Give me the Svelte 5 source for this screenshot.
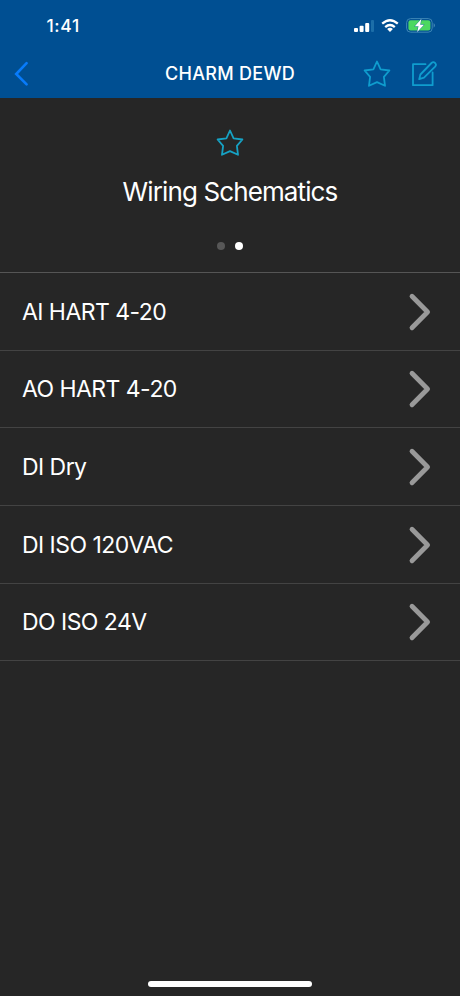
<script lang="ts">
  const schematics = ['AI HART 4-20', 'AO HART 4-20', 'DI Dry', 'DI ISO 120VAC', 'DO ISO 24V']
  const pages = 2

  let activePage = $state(1)
</script>

{#snippet star()}
  <svg class="star" width="30" height="30" viewBox="0 0 30 30">
    <path d="M15 2.5L18.6 10.4L27.4 11.5L21.9 17.8L23 26.8L15 23.1L7 26.8L8.1 17.8L2.6 11.5L11.4 10.4Z" />
  </svg>
{/snippet}

<div class="screen">
  <header>
    <div class="status-bar">
      <span class="time">1:41</span>
      <div class="indicators">
        <svg width="20" height="12" viewBox="0 0 20 12" fill="#fff">
          <rect x="0" y="8" width="4" height="4" rx="1" />
          <rect x="5.6" y="5.8" width="4" height="6.2" rx="1" />
          <rect x="11.2" y="3" width="4" height="9" rx="1" />
          <rect x="17" y="0" width="3" height="12" rx="1" fill="#1c6ea8" />
        </svg>
        <svg width="18" height="13" viewBox="0 0 18 13">
          <path d="M1.2 4.7Q9-2.2 16.8 4.7M4.2 8.1Q9 3.9 13.8 8.1" fill="none" stroke="#fff" stroke-width="2.3" />
          <path d="M6.1 10Q9 7.5 11.9 10L9 13Z" fill="#fff" />
        </svg>
        <svg width="30" height="15" viewBox="0 0 30 15">
          <rect x="0.6" y="0.6" width="25.6" height="13.6" rx="4" fill="none" stroke="#3d86b5" stroke-width="1" />
          <rect x="2.4" y="2.3" width="22" height="10.2" rx="2.2" fill="#4cd860" />
          <path d="M27.7 5Q30 7.4 27.7 9.8Z" fill="#4c91bd" />
          <path d="M15.3 1L8.8 8.2H12.5L11.2 14L18 6.7H14.2Z" fill="#fff" stroke="#12629a" stroke-width="0.8" paint-order="stroke" />
        </svg>
      </div>
    </div>
    <nav>
      <button class="back" aria-label="Back">
        <svg width="18" height="28" viewBox="0 0 18 28">
          <path d="M14.6 3.2L4.2 14L14.6 24.4" />
        </svg>
      </button>
      <h1>CHARM DEWD</h1>
      <div class="actions">
        <button aria-label="Favorite">{@render star()}</button>
        <button aria-label="Edit">
          <svg class="edit" width="28" height="28" viewBox="0 0 28 28">
            <path d="M15.5 4.2H3V25.2H22.6V12.5" />
            <path d="M9.2 19.2L10.4 14.5L21.5 3Q23.3 1.3 25.1 3Q26.8 4.8 25.1 6.6L14 17.7Z" />
          </svg>
        </button>
      </div>
    </nav>
  </header>

  <section class="hero">
    {@render star()}
    <h2>Wiring Schematics</h2>
    <div class="dots">
      {#each { length: pages } as _, i}
        <button class:active={i === activePage} aria-label="Page {i + 1}" onclick={() => (activePage = i)}></button>
      {/each}
    </div>
  </section>

  <ul>
    {#each schematics as name}
      <li>
        <span>{name}</span>
        <svg class="chevron" width="24" height="40" viewBox="0 0 24 40">
          <path d="M4 4.3L19.6 20L4 35.7" />
        </svg>
      </li>
    {/each}
  </ul>

  <footer><div class="home-indicator"></div></footer>
</div>

<style>
  :global(body) {
    background: #262626;
  }
  .screen {
    display: flex;
    flex-direction: column;
    height: 996px;
    background: #262626;
    color: #fff;
    font-family: Inter, Roboto, sans-serif;
  }
  svg {
    display: block;
  }
  button {
    padding: 0;
    border: 0;
    background: none;
  }
  header {
    height: 98px;
    background: #004f92;
  }
  .status-bar {
    display: flex;
    justify-content: space-between;
    align-items: center;
    height: 51px;
    padding: 0 24px 0 46.5px;
    box-sizing: border-box;
  }
  .time {
    font-size: 17.5px;
    font-weight: 500;
    letter-spacing: 0.6px;
  }
  .indicators {
    display: flex;
    align-items: center;
    gap: 7px;
  }
  nav {
    display: grid;
    grid-template-columns: 100px 1fr 100px;
    align-items: center;
    height: 45px;
  }
  .back {
    justify-self: start;
    padding-left: 12px;
  }
  .back path {
    fill: none;
    stroke: #087bfa;
    stroke-width: 2.6;
    stroke-linecap: round;
  }
  h1 {
    margin: 0;
    font-size: 18px;
    font-weight: 500;
    letter-spacing: 0.3px;
    text-align: center;
  }
  .actions {
    display: flex;
    justify-content: flex-end;
    gap: 18px;
    padding-right: 22.5px;
  }
  .star path,
  .edit path {
    fill: none;
    stroke: #0f9dce;
    stroke-width: 1.8;
    stroke-linejoin: round;
    stroke-linecap: round;
  }
  .hero {
    display: flex;
    flex-direction: column;
    align-items: center;
    height: 174px;
    padding-top: 30px;
    box-sizing: border-box;
  }
  .hero .star path {
    stroke: #16a2c4;
  }
  h2 {
    margin: 16px 0 0;
    font-size: 26px;
    font-weight: 400;
    line-height: 36px;
    letter-spacing: -0.88px;
  }
  .dots {
    display: flex;
    gap: 10px;
    margin-top: 32px;
  }
  .dots button {
    width: 8px;
    height: 8px;
    border-radius: 50%;
    background: #575757;
  }
  .dots .active {
    background: #fff;
  }
  ul {
    margin: 0;
    padding: 0;
    list-style: none;
    border-top: 1px solid #555;
  }
  li {
    display: flex;
    justify-content: space-between;
    align-items: center;
    height: 77.65px;
    padding: 1px 28px 0 22px;
    box-sizing: border-box;
    border-bottom: 1px solid #434343;
    font-size: 23px;
    letter-spacing: -0.55px;
  }
  .chevron path {
    fill: none;
    stroke: #999;
    stroke-width: 4.8;
    stroke-linecap: round;
    stroke-linejoin: round;
  }
  footer {
    display: flex;
    justify-content: center;
    margin-top: auto;
    padding-bottom: 9px;
  }
  .home-indicator {
    width: 164px;
    height: 6px;
    border-radius: 3px;
    background: #fff;
  }
</style>
